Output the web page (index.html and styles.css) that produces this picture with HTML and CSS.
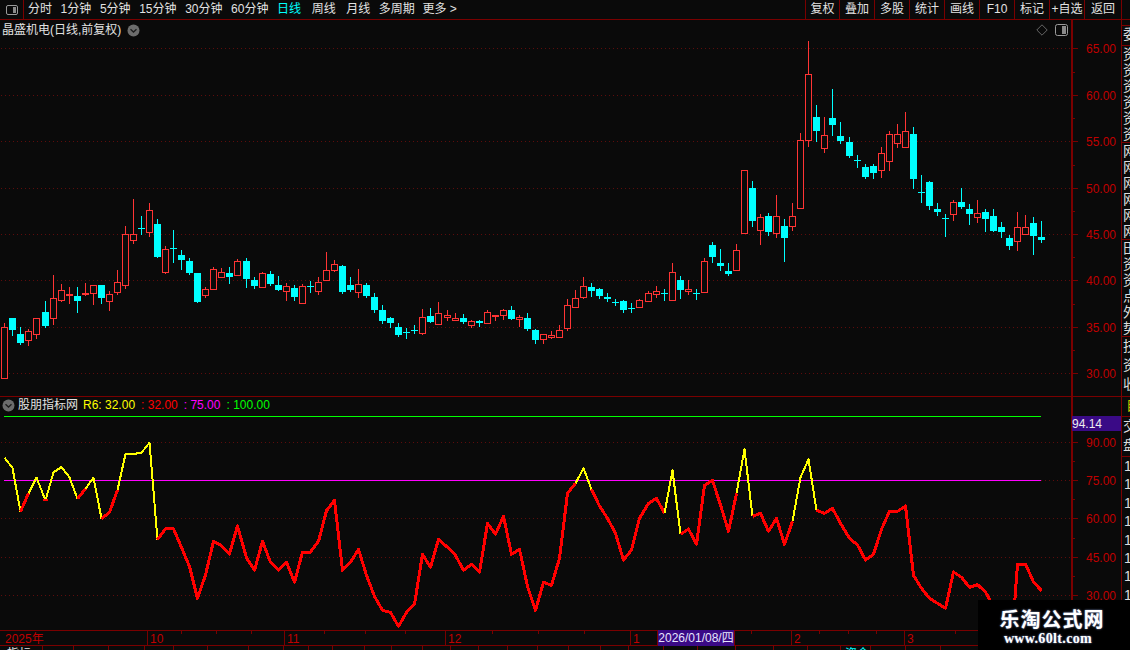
FILE: index.html
```html
<!DOCTYPE html>
<html lang="zh-CN">
<head>
<meta charset="utf-8">
<title>晶盛机电 日线</title>
<link rel="stylesheet" href="styles.css">
</head>
<body>
<div class="app">
  <header class="topbar">
    <div class="layout-btn">
      <svg class="panel-icon" width="14" height="10" viewBox="0 0 14 10"><rect x="1.5" y="0.5" width="11" height="9" rx="1.5" class="panel-frame"/><rect x="8" y="2" width="3" height="6" class="panel-fill"/></svg>
    </div>
    <nav class="periods">
      <span class="period">分时</span>
      <span class="period">1分钟</span>
      <span class="period">5分钟</span>
      <span class="period">15分钟</span>
      <span class="period">30分钟</span>
      <span class="period">60分钟</span>
      <span class="period is-active">日线</span>
      <span class="period period-wide">周线</span>
      <span class="period period-wide">月线</span>
      <span class="period">多周期</span>
      <span class="period period-more">更多 &gt;</span>
    </nav>
    <nav class="actions">
      <span class="action">复权</span>
      <span class="action">叠加</span>
      <span class="action">多股</span>
      <span class="action">统计</span>
      <span class="action">画线</span>
      <span class="action">F10</span>
      <span class="action">标记</span>
      <span class="action">+自选</span>
      <span class="action">返回</span>
    </nav>
  </header>

  <main class="workspace">
    <section class="charts">
      <div class="price-pane">
        <svg id="price-chart" class="chart-svg" width="1071" height="376" viewBox="0 20 1071 376"></svg>
        <div class="pane-title">
          <span>晶盛机电(日线,前复权)</span>
          <svg class="round-icon" width="13" height="13" viewBox="0 0 13 13"><circle cx="6.5" cy="6.5" r="6" class="round-bg"/><path d="M3.5 5.2 6.5 8 9.5 5.2" class="round-mark"/></svg>
        </div>
        <div class="pane-tools">
          <svg width="12" height="12" viewBox="0 0 12 12"><path d="M6 .8 11.2 6 6 11.2.8 6Z" class="diamond"/></svg>
          <svg width="13" height="12" viewBox="0 0 13 12"><rect x="0.5" y="0.5" width="12" height="11" rx="2" class="panel-frame"/><rect x="7" y="2" width="4" height="8" class="panel-fill"/></svg>
        </div>
      </div>
      <div class="indicator-pane">
        <svg id="indicator-chart" class="chart-svg" width="1071" height="233" viewBox="0 397 1071 233"></svg>
        <div class="indicator-legend">
          <svg class="round-icon" width="13" height="13" viewBox="0 0 13 13"><circle cx="6.5" cy="6.5" r="6" class="round-bg"/><path d="M3.5 5.2 6.5 8 9.5 5.2" class="round-mark"/></svg>
          <span class="legend-name">股朋指标网</span>
          <span class="c-yellow">R6: 32.00</span>
          <span class="c-red">: 32.00</span>
          <span class="c-magenta">: 75.00</span>
          <span class="c-green">: 100.00</span>
        </div>
      </div>
    </section>
    <aside class="scale">
      <svg id="scale-axis" class="chart-svg" width="50" height="610" viewBox="0 20 50 610"></svg>
    </aside>
    <aside class="strip">
      <div class="strip-gap"></div>
      <div class="strip-tab strip-tab-short">委</div>
      <div class="strip-tab strip-tab-tall">资<br>资<br>资<br>资<br>资<br>资</div>
      <div class="strip-tab strip-tab-tall">网<br>网<br>网<br>网<br>网<br>网</div>
      <div class="strip-tab strip-tab-tall">田<br>资<br>资<br>点<br>外<br>势</div>
      <div class="strip-tab strip-tab-end">技<br>资<br>收</div>
      <div class="strip-tab strip-self">自</div>
      <div class="strip-tab strip-double">交<br>盘</div>
      <div class="strip-nums">1<br>1<br>1<br>1<br>1<br>1<br>1<br>1<br>1</div>
    </aside>
  </main>

  <div class="date-axis">
    <svg id="date-axis" class="chart-svg" width="1130" height="16" viewBox="0 630 1130 16"></svg>
    <span class="cursor-date">2026/01/08/四</span>
  </div>
  <footer class="bottom-row">
    <svg id="bottom-ticks" class="chart-svg" width="1130" height="4" viewBox="0 646 1130 4"></svg>
    <span class="bottom-label">指标</span>
    <span class="bottom-label bottom-label-cyan">资金</span>
  </footer>

  <div class="watermark">
    <div class="watermark-title">乐淘公式网</div>
    <div class="watermark-url">www.60lt.com</div>
  </div>
</div>
<script src="chart.js"></script>
</body>
</html>
```
FILE: styles.css
```css
* { box-sizing: border-box; }
html, body { margin: 0; padding: 0; background: #0a0a0a; }
body { font-family: "Liberation Sans", "Noto Sans CJK SC", sans-serif; font-size: 12px; color: #e2e2e2; }

.app { position: relative; width: 1130px; height: 650px; overflow: hidden; display: flex; flex-direction: column; background: #0a0a0a; }

/* top bar */
.topbar { flex: 0 0 20px; display: flex; align-items: stretch; padding-right: 8px; border-bottom: 1px solid #7a0000; line-height: 19px; }
.layout-btn { width: 24px; display: flex; align-items: center; justify-content: center; border-right: 1px solid #7a0000; }
.panel-frame { fill: none; stroke: #9a9a9a; }
.panel-fill { fill: #8a8a8a; }
.periods { display: flex; gap: 8.6px; padding-left: 4px; }
.period { white-space: nowrap; }
.period-wide { margin-left: 2px; }
.period-more { margin-left: -1px; }
.is-active { color: #00ffff; }
.actions { display: flex; margin-left: auto; }
.action { width: 35px; text-align: center; border-left: 1px solid #7a0000; white-space: nowrap; }
.action:first-child { width: 34px; }
.action:last-child { width: 38px; border-right: 1px solid #7a0000; }

/* main layout */
.workspace { flex: 0 0 610px; display: flex; }
.charts { flex: 0 0 1071px; display: flex; flex-direction: column; }
.price-pane { position: relative; flex: 0 0 377px; border-bottom: 1px solid #7a0000; }
.indicator-pane { position: relative; flex: 0 0 233px; }
.chart-svg { display: block; shape-rendering: crispEdges; }
.scale { flex: 0 0 50px; }

.pane-title { position: absolute; left: 2px; top: 2px; display: flex; align-items: center; gap: 6px; line-height: 16px; }
.round-bg { fill: #6c6c6c; }
.round-mark { fill: none; stroke: #1c1c1c; stroke-width: 1.3; }
.round-icon { shape-rendering: auto; flex: none; }
.pane-tools { position: absolute; right: 3px; top: 4px; display: flex; gap: 7px; align-items: center; }
.diamond { fill: none; stroke: #666; }

.indicator-legend { position: absolute; left: 2px; top: 0; height: 16px; display: flex; align-items: center; gap: 6px; line-height: 16px; white-space: nowrap; }
.legend-name { margin-left: -3px; margin-right: -1px; }
.c-yellow { color: #ffff00; }
.c-red { color: #ff0000; }
.c-magenta { color: #ff00ff; }
.c-green { color: #00ff00; }

/* svg pieces */
.axis-text { font-family: "Liberation Sans", "Noto Sans CJK SC", sans-serif; font-size: 12px; fill: #c00000; }
.value-text { font-family: "Liberation Sans", sans-serif; font-size: 12px; fill: #eeeeee; }

/* right strip */
.strip { flex: 0 0 9px; display: flex; flex-direction: column; border-left: 1px solid #7a0000; overflow: hidden; font-size: 14px; line-height: 16px; color: #dcdcdc; }
.strip-gap { flex: 0 0 5px; }
.strip-tab { border-top: 1px solid #7a0000; padding-left: 1px; white-space: nowrap; overflow: hidden; }
.strip-tab-short { flex: 0 0 20px; }
.strip-tab-tall { flex: 0 0 97px; }
.strip-tab-end { flex: 0 0 60px; line-height: 19px; }
.strip-self { flex: 0 0 20px; padding-left: 4px; color: #c8c800; }
.strip-double { flex: 0 0 40px; line-height: 19px; }
.strip-nums { border-top: 1px solid #7a0000; padding-left: 2px; line-height: 18.4px; }

/* date axis */
.date-axis { position: relative; flex: 0 0 16px; }
.cursor-date { position: absolute; left: 657px; top: 0; width: 78px; height: 16px; line-height: 16px; text-align: center; background: #3a0a86; color: #e6e6ff; border: 1px solid #7a0000; border-top: 0; border-bottom: 0; white-space: nowrap; }
.bottom-row { position: relative; flex: 0 0 4px; overflow: hidden; }
.bottom-label { position: absolute; left: 7px; top: 1px; line-height: 14px; }
.bottom-label-cyan { left: 845px; color: #00ffff; }

/* watermark overlay */
.watermark { position: absolute; right: 0; bottom: 0; width: 152px; height: 50px; background: #000; color: #fff; text-align: center; }
.watermark-title { font-family: "Noto Sans CJK SC", sans-serif; font-weight: 700; font-size: 20px; letter-spacing: 1px; line-height: 26px; padding-top: 6px; margin-right: 4px; height: 31px; text-shadow: 0 0 2px #8ea4d8; white-space: nowrap; }
.watermark-url { font-family: "Liberation Serif", serif; font-weight: 700; font-size: 14px; line-height: 16px; letter-spacing: .35px; margin-right: 12px; text-shadow: 0 0 2px #8ea4d8; white-space: nowrap; }
```
FILE: chart.js
```js
// Candle rows: colour, high, body top, body bottom, low, in 1/3 px from a base y.
const CANDLE_GROUPS = [
  [190, `r 400 412 563 563|c 385 385 419 434|c 412 433 458 461|r 418 424 451 465|r 385 385 433 443|c 334 367 407 411|r 255 325 383 402|r 282 301 329 333|r 292 313 313 338|c 292 319 332 365|r 280 310 313 315|r 286 286 310 341|c 286 286 323 338|r 304 313 334 359|r 240 277 307 311|r 108 133 286 293|r 27 133 151 158|c 78 113 116 132|r 40 61 127 137|c 87 103 200 200|r 168 178 245 248|c 120 175 176 215|c 180 196 209 236|c 205 214 248 251|c 249 249 335 335|r 292 298 314 320|r 232 238 298 298|r 235 247 260 260|c 232 250 260 278|r 207 214 256 256|c 205 214 266 290|c 262 271 287 293|r 246 250 290 290|c 243 253 281 285|c 259 286 299 299`],
  [230, `r 160 169 182 209|c 165 174 200 209|r 163 169 220 220|c 153 167 169 185|r 141 157 182 191|r 66 121 151 151|r 90 103 119 122|c 105 108 186 189|c 141 165 180 183|r 117 163 185 201|c 159 165 198 201|c 189 201 240 246|c 225 240 273 279|c 261 264 279 291|c 279 291 315 318|c 294 307 309 324|c 285 300 302 309|r 237 262 308 311|c 234 258 276 276|r 216 250 281 281|r 240 256 260 270|r 249 265 269 270|c 252 264 276 279|r 270 274 284 291|c 270 273 279 288|r 240 247 278 278|r 255 255 257 270|r 237 241 254 267|c 228 240 267 267|r 255 262 266 288|c 249 264 297 300|c 297 300 330 339|r 312 313 327 339|r 304 316 320 324|r 285 301 320 320`],
  [170, `r 388 406 473 480|r 360 385 410 410|r 321 349 380 384|c 339 351 363 378|c 354 358 378 384|c 369 381 387 393|c 387 396 398 405|c 390 393 420 426|c 399 414 416 426|r 387 391 410 410|r 363 370 392 392|r 348 364 371 381|c 357 369 371 390|r 279 307 389 389|c 318 330 360 384|r 330 358 362 372|c 357 369 371 387|r 264 274 365 365|c 216 225 261 276|c 237 279 288 300|c 279 303 312 315|r 222 241 299 299|r 0 0 188 188|c 33 54 153 168|r 132 142 179 222|c 129 138 186 195|r 75 139 188 201|c 147 168 204 273|r 99 139 167 180`],
  [30, `r 309 331 533 533|r 33 133 331 348|c 225 261 303 333|r 261 316 353 366|c 177 264 285 315|c 276 318 333 339|c 321 336 378 381|c 375 391 393 411|c 402 411 441 444|c 402 408 429 444|r 351 370 421 441|r 303 313 392 420|r 282 313 338 351|r 246 304 350 350|c 291 312 447 474|c 435 487 489 516|c 453 456 528 537|c 519 537 546 555|c 552 564 566 618|r 510 517 551 570|c 474 516 531 534|c 522 537 552 582|r 510 550 560 576|c 537 546 567 603|c 537 558 603 603|c 576 591 606 621|c 615 624 648 657|r 546 592 632 660|r 555 592 611 611|c 561 579 618 672|c 573 621 630 636`]
];

// Indicator line, 1/3 px from a base y.
const LINE_GROUPS = [
  [390, [203,234,365,310,263,331,247,231,262,326,296,263,386,367,300,192,192,188,158,449,416,416,472,530,625,555,454,467,492,408,503,541,454,517,541,517,577]],
  [470, [246,246,214,122,91,301,277,238,316,379,421,427,469,427,403,253,292,208,232,256,301,283,307,160,193,139,253,238,349,421,337,346,265,70,40,-5,58]],
  [430, [228,265,310,390,360,265,220,205,250,121,313,297,343,166,151,225,304,190,58,259,250,304,265,343,274,142,88,241,250,235,280,325,345,390,373,298,244,244]],
  [390, [348,556,595,625,640,655,546,562,592,584,606,650,760,846,522,522,576,602]]
];
const YELLOW_SEGMENTS = new Set([0,1,3,4,5,6,7,8,10,11,14,15,16,17,18,71,72,82,83,91,92,98,99,100]);

const RED = "#ff3434", CYAN = "#00ffff", BG = "#0a0a0a", LINE = "#7a0000", GRID = "#5e0c0c";
const centerX = i => Math.round(4.33 + 8.04 * i);

const candles = [];
CANDLE_GROUPS.forEach(([base, rows]) => rows.split("|").forEach(row => {
  const [c, hi, top, bot, lo] = row.split(" ");
  const y = v => Math.round(base + Number(v) / 3);
  candles.push({ red: c === "r", hi: y(hi), top: y(top), bot: y(bot), lo: y(lo) });
}));

const linePoints = [];
LINE_GROUPS.forEach(([base, values]) => values.forEach(v => {
  const i = linePoints.length;
  linePoints.push([centerX(i) + 0.5, base + v / 3]);
}));

function hLine(y, x1, x2, color, dash) {
  const d = dash ? ` stroke-dasharray="${dash}"` : "";
  return `<line x1="${x1}" x2="${x2}" y1="${y + 0.5}" y2="${y + 0.5}" stroke="${color}"${d}/>`;
}
function vLine(x, y1, y2, color) {
  return `<line x1="${x + 0.5}" x2="${x + 0.5}" y1="${y1}" y2="${y2}" stroke="${color}"/>`;
}

function drawPrice() {
  let s = "";
  [48, 95, 141, 188, 234, 280, 327, 373].forEach(y => { s += hLine(y, 1, 1070, GRID, "1 3"); });
  candles.forEach((k, i) => {
    const c = centerX(i), color = k.red ? RED : CYAN;
    s += vLine(c, k.hi, k.lo + 1, color);
    if (k.bot - k.top <= 1 && !k.red) {
      s += hLine(k.top, c - 3, c + 4, color);
    } else if (k.red) {
      s += `<rect x="${c - 2.5}" y="${k.top + 0.5}" width="6" height="${Math.max(k.bot - k.top, 1)}" fill="${BG}" stroke="${color}"/>`;
    } else {
      s += `<rect x="${c - 3}" y="${k.top}" width="7" height="${k.bot - k.top}" fill="${color}"/>`;
    }
  });
  document.getElementById("price-chart").innerHTML = s;
}

function drawIndicator() {
  let s = "";
  [442, 518, 557, 595].forEach(y => { s += hLine(y, 1, 1070, GRID, "1 3"); });
  s += hLine(480, 1041, 1070, GRID, "1 3");
  s += hLine(416, 4, 1041, "#00ff00");
  s += hLine(480, 4, 1041, "#ff00ff");

  const runs = [];
  for (let i = 0; i < linePoints.length - 1; i++) {
    const yellow = YELLOW_SEGMENTS.has(i), last = runs[runs.length - 1];
    if (last && last.yellow === yellow) last.pts.push(linePoints[i + 1]);
    else runs.push({ yellow, pts: [linePoints[i], linePoints[i + 1]] });
  }
  runs.forEach(r => {
    s += `<polyline points="${r.pts.map(p => p.join(",")).join(" ")}" fill="none" stroke="${r.yellow ? "#ffff00" : "#ff0000"}" stroke-width="${r.yellow ? 2 : 3}" stroke-linejoin="round"/>`;
  });
  const [dx, dy] = linePoints[5];
  s += `<rect x="${dx - 3}" y="${dy - 1}" width="5" height="2" fill="#ff0000"/>`;
  document.getElementById("indicator-chart").innerHTML = s;
}

function drawScale() {
  let s = `<rect x="0" y="20" width="1.5" height="610" fill="${LINE}"/>`;
  const major = (y, label) => {
    s += hLine(y, 1, 7, LINE);
    s += `<text class="axis-text" x="15" y="${y + 5}">${label}</text>`;
  };
  [[48, "65.00"], [95, "60.00"], [141, "55.00"], [188, "50.00"], [234, "45.00"], [280, "40.00"], [327, "35.00"], [373, "30.00"],
   [442, "90.00"], [480, "75.00"], [518, "60.00"], [557, "45.00"], [595, "30.00"]].forEach(([y, t]) => major(y, t));
  [72, 118, 165, 211, 257, 304, 350, 461, 499, 538, 576].forEach(y => { s += hLine(y, 1, 4, LINE); });
  s += hLine(396, 0, 50, LINE);
  s += `<rect x="1" y="416" width="49" height="15" fill="#3a0a86"/>`;
  s += `<text class="value-text" x="1" y="428">94.14</text>`;
  document.getElementById("scale-axis").innerHTML = s;
}

function drawDateAxis() {
  let s = hLine(630, 0, 1130, LINE) + hLine(645, 0, 1130, LINE);
  [181, 216, 251, 324, 365, 405, 492, 538, 584, 751, 819, 848, 876, 955, 1000].forEach(x => { s += vLine(x, 630, 634, LINE); });
  s += `<text class="axis-text" x="5" y="643">2025年</text>`;
  [[147, "10"], [284, "11"], [445, "12"], [630, "1"], [791, "2"], [904, "3"]].forEach(([x, t]) => {
    s += vLine(x, 630, 646, LINE);
    s += `<text class="axis-text" x="${x + 3}" y="643">${t}</text>`;
  });
  document.getElementById("date-axis").innerHTML = s;
}

function drawBottomTicks() {
  let s = "";
  [42, 73, 108, 144, 173, 207, 248, 283, 308, 332, 364, 391, 422, 450, 478, 507, 537, 568, 600, 628, 663, 697, 735, 773, 807, 840, 870, 905, 940].forEach(x => {
    s += vLine(x, 646, 650, LINE);
  });
  document.getElementById("bottom-ticks").innerHTML = s;
}

drawPrice();
drawIndicator();
drawScale();
drawDateAxis();
drawBottomTicks();
```
